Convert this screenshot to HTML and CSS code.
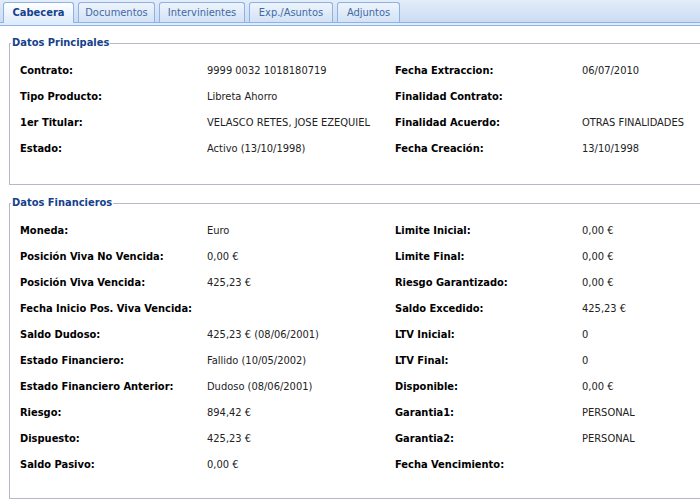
FILE: index.html
```html
<!DOCTYPE html>
<html lang="es">
<head>
<meta charset="utf-8">
<title>Cabecera</title>
<link rel="stylesheet" href="styles.css">
</head>
<body>
<div class="tabpanel">
  <div class="tabbar">
    <div class="tab active tab-cab">Cabecera</div>
    <div class="tab tab-doc">Documentos</div>
    <div class="tab tab-int">Intervinientes</div>
    <div class="tab tab-exp">Exp./Asuntos</div>
    <div class="tab tab-adj">Adjuntos</div>
  </div>
  <div class="strip"></div>
  <div class="body">
    <fieldset class="group group-first">
      <legend>Datos Principales</legend>
      <div class="grid">
        <div class="lbl">Contrato:</div><div class="val">9999 0032 1018180719</div>
        <div class="lbl">Fecha Extraccion:</div><div class="val">06/07/2010</div>
        <div class="lbl">Tipo Producto:</div><div class="val">Libreta Ahorro</div>
        <div class="lbl">Finalidad Contrato:</div><div class="val"></div>
        <div class="lbl">1er Titular:</div><div class="val">VELASCO RETES, JOSE EZEQUIEL</div>
        <div class="lbl">Finalidad Acuerdo:</div><div class="val">OTRAS FINALIDADES</div>
        <div class="lbl">Estado:</div><div class="val">Activo (13/10/1998)</div>
        <div class="lbl">Fecha Creación:</div><div class="val">13/10/1998</div>
      </div>
    </fieldset>
    <fieldset class="group group-last">
      <legend>Datos Financieros</legend>
      <div class="grid">
        <div class="lbl">Moneda:</div><div class="val">Euro</div>
        <div class="lbl">Limite Inicial:</div><div class="val">0,00 €</div>
        <div class="lbl">Posición Viva No Vencida:</div><div class="val">0,00 €</div>
        <div class="lbl">Limite Final:</div><div class="val">0,00 €</div>
        <div class="lbl">Posición Viva Vencida:</div><div class="val">425,23 €</div>
        <div class="lbl">Riesgo Garantizado:</div><div class="val">0,00 €</div>
        <div class="lbl">Fecha Inicio Pos. Viva Vencida:</div><div class="val"></div>
        <div class="lbl">Saldo Excedido:</div><div class="val">425,23 €</div>
        <div class="lbl">Saldo Dudoso:</div><div class="val">425,23 € (08/06/2001)</div>
        <div class="lbl">LTV Inicial:</div><div class="val">0</div>
        <div class="lbl">Estado Financiero:</div><div class="val">Fallido (10/05/2002)</div>
        <div class="lbl">LTV Final:</div><div class="val">0</div>
        <div class="lbl">Estado Financiero Anterior:</div><div class="val">Dudoso (08/06/2001)</div>
        <div class="lbl">Disponible:</div><div class="val">0,00 €</div>
        <div class="lbl">Riesgo:</div><div class="val">894,42 €</div>
        <div class="lbl">Garantia1:</div><div class="val">PERSONAL</div>
        <div class="lbl">Dispuesto:</div><div class="val">425,23 €</div>
        <div class="lbl">Garantia2:</div><div class="val">PERSONAL</div>
        <div class="lbl">Saldo Pasivo:</div><div class="val">0,00 €</div>
        <div class="lbl">Fecha Vencimiento:</div><div class="val"></div>
      </div>
    </fieldset>
  </div>
</div>
</body>
</html>
```

FILE: styles.css
```css
html, body {
  margin: 0;
  padding: 0;
  background: #ffffff;
  overflow: hidden;
}
body {
  font-family: "DejaVu Sans", Tahoma, sans-serif;
  font-stretch: condensed;
  font-size: 11px;
  color: #000;
}
.tabpanel {
  width: 700px;
}
.tabbar {
  box-sizing: border-box;
  height: 23px;
  padding: 2px 0 0 3px;
  display: flex;
  align-items: flex-end;
  gap: 4px;
  background: linear-gradient(#e3ecf9, #cbdcf2);
  border-bottom: 1px solid #8db2e3;
}
.tab {
  box-sizing: border-box;
  height: 20px;
  border: 1px solid #8db2e3;
  border-bottom: none;
  border-radius: 3px 3px 0 0;
  background: linear-gradient(#eef4fc, #d3e2f6);
  color: #416aa3;
  font-size: 11px;
  line-height: 19px;
  text-align: center;
  white-space: nowrap;
}
.tab.active {
  height: 21px;
  margin-bottom: -1px;
  background: linear-gradient(#ffffff, #deecfd);
  color: #15428b;
  font-weight: bold;
  position: relative;
}
.tab-cab { width: 71px; }
.tab-doc { width: 77px; }
.tab-int { width: 86px; }
.tab-exp { width: 84px; }
.tab-adj { width: 63px; }
.strip {
  height: 2px;
  background: #deecfd;
  border-bottom: 1px solid #8db2e3;
}
.body {
  padding-top: 10px;
}
.group {
  width: 720px;
  margin: 0 0 0 9px;
  padding: 0 0 23px 1px;
  border: 1px solid #b5b8c8;
  min-width: 0;
}
.group-first {
  margin-bottom: 11px;
}
.group-last {
  padding-bottom: 21px;
}
.group legend {
  padding: 0 1px;
  margin: 0;
  font-size: 11px;
  line-height: 14px;
  font-weight: bold;
  color: #15428b;
}
.grid {
  display: grid;
  grid-template-columns: 187px 188px 187px 1fr;
  grid-auto-rows: 26px;
  align-items: center;
  padding: 7px 0 0 9px;
}
.lbl {
  font-weight: bold;
  font-size: 11px;
  white-space: nowrap;
}
.val {
  font-size: 11px;
  color: #222;
  white-space: nowrap;
}
```
